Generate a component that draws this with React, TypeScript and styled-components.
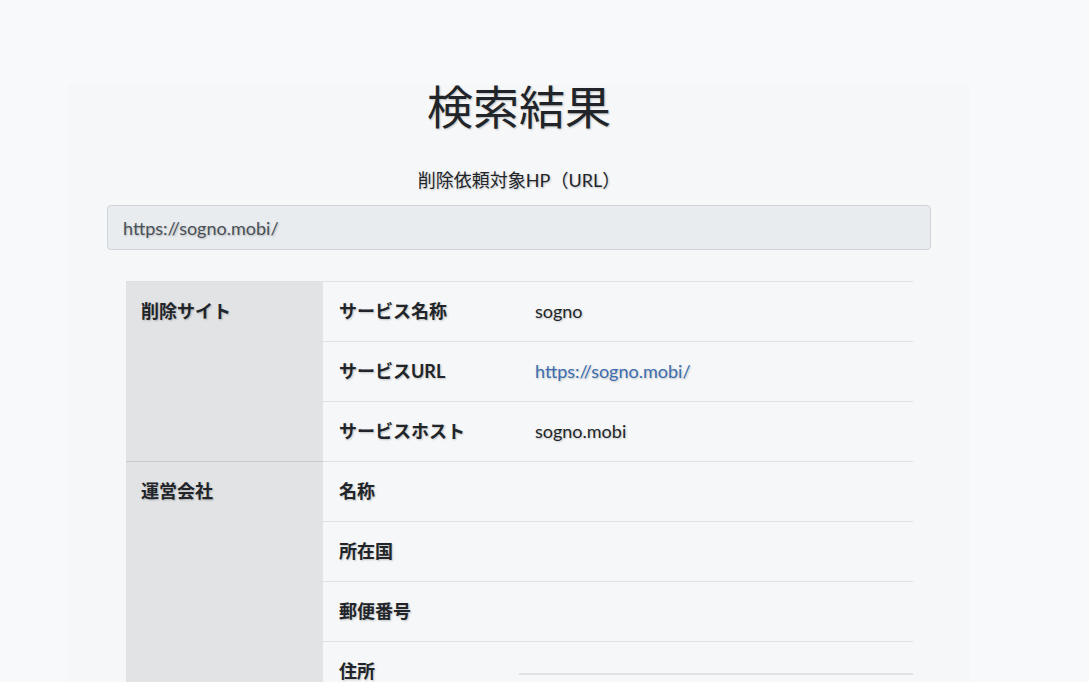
import styled, { createGlobalStyle } from "styled-components";

const GlobalStyle = createGlobalStyle`
  html, body {
    margin: 0;
    padding: 0;
    background: #f8f9fa;
  }
  body {
    font-family: Lato, "Noto Sans CJK JP", sans-serif;
    color: #212529;
    text-shadow: 1px 1px 2px rgba(0, 0, 0, 0.22);
  }
`;

const Page = styled.div`
  padding-top: 84px;
  min-height: 100vh;
`;

const Container = styled.main`
  margin-left: 68px;
  width: 902px;
  background: #f6f7f8;
  padding: 0 39px 40px;
  box-sizing: border-box;
`;

const Title = styled.h1`
  margin: 0;
  text-align: center;
  font-size: 46px;
  font-weight: 400;
  line-height: 46px;
  color: #212529;
`;

const FieldLabel = styled.label`
  display: block;
  margin: 38px 0 13px;
  text-align: center;
  font-size: 18px;
  line-height: 24px;
`;

const ReadOnlyInput = styled.div`
  height: 45px;
  box-sizing: border-box;
  padding: 0 15px;
  display: flex;
  align-items: center;
  background: #e9ecef;
  border: 1px solid #ced4da;
  border-radius: 4px;
  font-size: 18px;
  color: #495057;
`;

const ResultTable = styled.table`
  margin: 31px 0 0 19px;
  width: 787px;
  border-collapse: collapse;
  table-layout: fixed;
`;

const GroupHead = styled.th<{ $first?: boolean }>`
  width: 197px;
  box-sizing: border-box;
  background: #e2e3e5;
  vertical-align: top;
  text-align: left;
  padding: 16px 15px;
  font-size: 18px;
  line-height: 27px;
  font-weight: 700;
  border-top: 1px solid ${(p) => (p.$first ? "#dee2e6" : "#c9cbce")};
`;

const Row = styled.tr`
  border-top: 1px solid #dee2e6;
`;

const ItemHead = styled.th`
  width: 196px;
  box-sizing: border-box;
  text-align: left;
  vertical-align: top;
  padding: 16px;
  font-size: 18px;
  line-height: 27px;
  font-weight: 700;
  border-top: 1px solid #dee2e6;
`;

const ItemValue = styled.td<{ $nested?: boolean }>`
  vertical-align: top;
  padding: ${(p) => (p.$nested ? "31px 0 0" : "16px")};
  font-size: 18px;
  line-height: 27px;
  border-top: 1px solid #dee2e6;
`;

const Link = styled.a`
  color: #3c6db0;
  text-decoration: none;
`;

const NestedRule = styled.div`
  border-top: 2px solid #dee2e6;
  height: 40px;
`;

type Item = { label: string; value?: string; href?: boolean; nested?: boolean };

const groups: { title: string; items: Item[] }[] = [
  {
    title: "削除サイト",
    items: [
      { label: "サービス名称", value: "sogno" },
      { label: "サービスURL", value: "https://sogno.mobi/", href: true },
      { label: "サービスホスト", value: "sogno.mobi" },
    ],
  },
  {
    title: "運営会社",
    items: [
      { label: "名称" },
      { label: "所在国" },
      { label: "郵便番号" },
      { label: "住所", nested: true },
    ],
  },
];

export default function App() {
  return (
    <>
      <GlobalStyle />
      <Page>
        <Container>
          <Title>検索結果</Title>
          <FieldLabel>削除依頼対象HP（URL）</FieldLabel>
          <ReadOnlyInput>https://sogno.mobi/</ReadOnlyInput>
          <ResultTable>
            <tbody>
              {groups.map((g, gi) =>
                g.items.map((item, i) => (
                  <Row key={g.title + item.label}>
                    {i === 0 && (
                      <GroupHead $first={gi === 0} rowSpan={g.items.length}>
                        {g.title}
                      </GroupHead>
                    )}
                    <ItemHead>{item.label}</ItemHead>
                    <ItemValue $nested={item.nested}>
                      {item.nested ? (
                        <NestedRule />
                      ) : item.href ? (
                        <Link href={item.value}>{item.value}</Link>
                      ) : (
                        item.value
                      )}
                    </ItemValue>
                  </Row>
                ))
              )}
            </tbody>
          </ResultTable>
        </Container>
      </Page>
    </>
  );
}
